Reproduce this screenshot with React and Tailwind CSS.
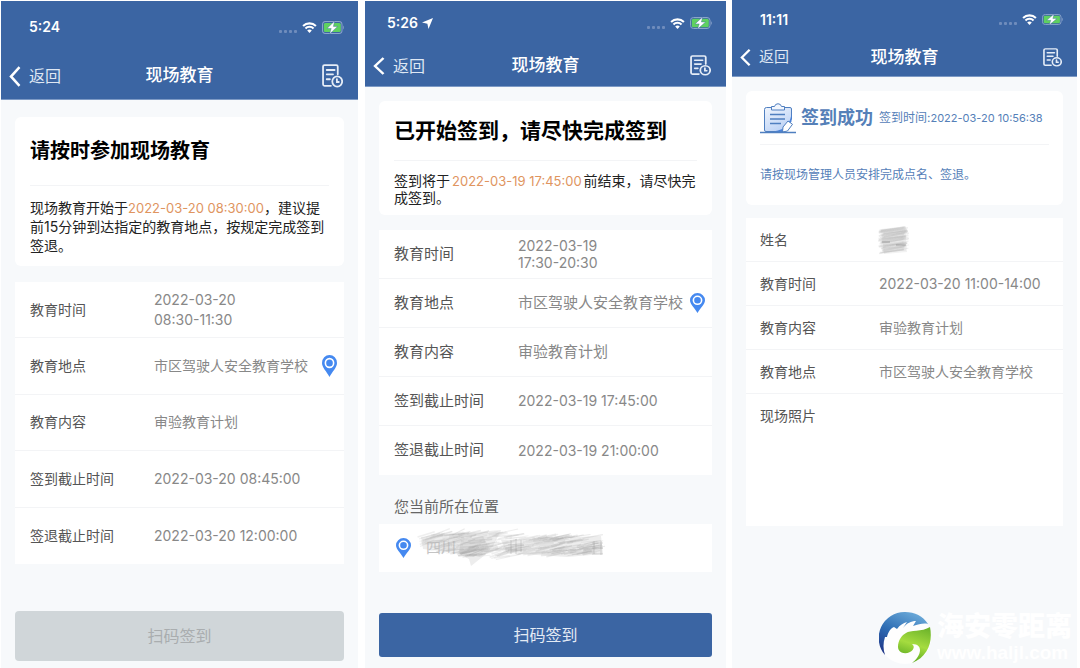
import { clsx } from 'clsx';

const FONT = "font-['Inter','Noto_Sans_CJK_SC',sans-serif]";

function WifiIcon() {
  return (
    <svg viewBox="0 0 16 12" className="h-[11px] w-[15px]" fill="none" stroke="#fff" strokeWidth="2.3">
      <path d="M1 4.3a10 10 0 0 1 14 0" />
      <path d="M3.6 7a6.3 6.3 0 0 1 8.8 0" />
      <path d="M8 12 5.5 9.3a3.3 3.3 0 0 1 5 0z" fill="#fff" stroke="none" />
    </svg>
  );
}

function BatteryIcon({ className }) {
  return (
    <svg viewBox="0 0 22 12" className={className} preserveAspectRatio="none">
      <rect x="0.5" y="0.5" width="19.5" height="11" rx="3" fill="none" stroke="#8ba4cb" />
      <rect x="1.8" y="1.8" width="17" height="8.4" rx="1.5" fill="#5fd160" />
      <path d="M21 4.2v3.6c1-.3 1-3.3 0-3.6z" fill="#8ba4cb" />
      <path d="M12.6 0 5 6.9h4.200L7.600 12l8-7h-4.200z" fill="#fff" stroke="#3b65a3" strokeWidth="0.4" />
    </svg>
  );
}

function LocationArrow() {
  return (
    <svg viewBox="0 0 10 10" className="size-[11px]">
      <path d="M10 0 5.900 10 4.900 5.200 0 4.200z" fill="#fff" />
    </svg>
  );
}

function RecordIcon({ className }) {
  return (
    <svg viewBox="0 0 20 22" className={className} preserveAspectRatio="none" fill="none" stroke="#e6edf7" strokeWidth="1.7" strokeLinecap="round">
      <path d="M8.5 20H2.4A1.4 1.4 0 0 1 1 18.600V2.400A1.400 1.400 0 0 1 2.400 1h11.200A1.400 1.400 0 0 1 15 2.400V9.500" />
      <path d="M4.500 5.500h7.500M4.500 9.500h6M4.500 14h3" />
      <circle cx="14.500" cy="16" r="4.700" />
      <path d="M14.200 13.800v2.700h1.800" />
    </svg>
  );
}

function PinIcon({ className }) {
  return (
    <svg viewBox="0 0 16 22" className={className} preserveAspectRatio="none">
      <path d="M8 0a8 8 0 0 0-8 8c0 4.500 5 8.500 8 14 3-5.500 8-9.500 8-14a8 8 0 0 0-8-8z" fill="#4589f0" />
      <circle cx="8" cy="8" r="4.400" fill="none" stroke="#fff" strokeWidth="1.700" />
    </svg>
  );
}

function ClipboardIcon() {
  return (
    <svg viewBox="0 0 36 33" className="h-[33px] w-[36px] shrink-0" fill="none" stroke="#4f7fc0" strokeLinejoin="round">
      <defs>
        <linearGradient id="board" x1="0" y1="0" x2="0.600" y2="1">
          <stop offset="0" stopColor="#f0f5fd" />
          <stop offset="1" stopColor="#bcd2f5" />
        </linearGradient>
      </defs>
      <path d="M6.500 6.500H30a1.500 1.500 0 0 1 1.500 1.500v10L24 30.500H6A1.500 1.500 0 0 1 4.500 29V8.500a2 2 0 0 1 2-2z" fill="url(#board)" />
      <path d="M31.500 12c-1 10-5 16.500-18 18.500h11l7-10z" fill="#4a82da" stroke="none" />
      <path d="M11.500 5.500h3a3.600 3.600 0 0 1 7 0h3v3.500h-13z" fill="#f2f6fd" />
      <path d="M10 13.500h15M10 18h15M10 22.500h11" strokeWidth="1.300" />
      <path d="m22.500 31 .5-5 5-6 4.500 3.300-5 6.700z" fill="#fff" />
      <path d="M0 31.500h36" strokeWidth="1.300" />
    </svg>
  );
}

function Header({ time, located, statusClass, navClass, backClass, chevronClass, iconClass, batteryClass }) {
  return (
    <header className="border-b border-[#7d9ac5] bg-[#3b65a3] text-white">
      <div className={clsx('flex items-center justify-between pr-[14px]', statusClass)}>
        <span className="flex items-center gap-1 text-sm font-semibold">
          {time}
          {located && <LocationArrow />}
        </span>
        <span className="flex items-center gap-[5px]">
          <span className="flex gap-[2px] pt-2">
            {[0, 1, 2, 3].map((n) => (
              <i key={n} className="size-[3px] rounded-[1px] bg-[#6f8cbc]" />
            ))}
          </span>
          <WifiIcon />
          <BatteryIcon className={batteryClass} />
        </span>
      </div>
      <nav className={clsx('grid grid-cols-[1fr_auto_1fr] items-center px-2', navClass)}>
        <button type="button" className={clsx('flex items-center gap-2 text-[#dfe7f3]', backClass)}>
          <svg viewBox="0 0 12 20" className={chevronClass} preserveAspectRatio="none" fill="none" stroke="#fff" strokeWidth="2.500">
            <path d="M10.500 1 2 10l8.500 9" />
          </svg>
          返回
        </button>
        <h1 className="text-[17px] font-medium">现场教育</h1>
        <button type="button" aria-label="记录" className="mr-[7px] justify-self-end">
          <RecordIcon className={iconClass} />
        </button>
      </nav>
    </header>
  );
}

function Row({ label, children, className }) {
  return (
    <div className={clsx('flex border-b border-[#f3f4f6] pl-[15px] pr-[7px] last:border-b-0 group-data-[compact]:pl-[14px]', className)}>
      <dt className="w-[124px] shrink-0 text-[#555] group-data-[compact]:w-[119px]">{label}</dt>
      <dd className="flex min-w-0 flex-1 items-center justify-between text-[#888]">{children}</dd>
    </div>
  );
}

function Num({ children }) {
  return <span className="text-sm">{children}</span>;
}

// Pseudoaleatório estável: o rabisco sai igual em toda renderização
function noise(n) {
  const x = Math.sin(n * 127.1 + 11.7) * 43758.5453;
  return x - Math.floor(x);
}

const ADDRESS_STROKES = Array.from({ length: 260 }, (_, i) => {
  const x = noise(i) * 168;
  const right = x > 82;
  const top = right ? 9 : 6;
  const span = right ? 20 : 15 + Math.min(x, 55) / 5;
  const y = top + noise(i + 500) * span;
  const len = 12 + noise(i + 900) * 12;
  const rise = right ? 1 + noise(i + 300) * 4 : 1 + noise(i + 300) * 6;
  const dark = (x > 32 && x < 54) || (x > 128 && x < 168);
  return { x, y, x2: Math.min(x + len, 189), y2: y - rise, dark };
});

const NAME_STROKES = Array.from({ length: 60 }, (_, i) => {
  const y = 6 + (i / 60) * 24;
  const x = noise(i + 40) * 6;
  return { x, y, x2: 25 + noise(i + 80) * 6, y2: y - 2 - noise(i + 60) * 3, dark: false };
});

function Strokes({ lines }) {
  return lines.map((l, i) => (
    <line
      key={i}
      x1={l.x}
      y1={l.y}
      x2={l.x2}
      y2={l.y2}
      stroke={l.dark ? '#a0a0a0' : '#b5b5b5'}
      strokeWidth={0.7 + noise(i + 7) * 1.1}
      strokeOpacity="0.22"
    />
  ));
}

// Rabiscos que escondem dados pessoais
function AddressSmudge() {
  return (
    <svg viewBox="0 0 190 40" className="h-[40px] w-[190px]">
      <text x="9" y="25" fontSize="15" fill="#c4c4c4">四川</text>
      <path d="M4 9 48 5 84 2 76 18 68 27 54 38 52 31 40 25 6 21zM84 12 184 8 186 26 150 29 90 25z" fill="#ccc" fillOpacity="0.35" />
      <path d="M44 12 66 8 72 20 56 29 42 25z" fill="#999" fillOpacity="0.2" />
      <Strokes lines={ADDRESS_STROKES} />
      <path d="M94 12v14M99 11v15M104 12v12M91 17h16M91 22h14M177 13v13M184 13v14M175 15h11M175 20h11M175 26h11" stroke="#888" strokeOpacity="0.3" />
    </svg>
  );
}

function NameSmudge() {
  return (
    <svg viewBox="0 0 32 32" className="-ml-px size-8">
      <path d="M3 6 27 2 29 28 6 30z" fill="#ccc" fillOpacity="0.25" />
      <Strokes lines={NAME_STROKES} />
      <path d="M4 18h8M18 21h10" stroke="#888" strokeWidth="2" strokeOpacity="0.35" />
    </svg>
  );
}

function Watermark() {
  return (
    <div className="absolute bottom-1 right-2 flex items-center gap-[6px] text-white">
      <svg viewBox="0 0 52 52" className="size-[52px]">
        <defs>
          <linearGradient id="wmBlue" x1="0.700" y1="0" x2="0.200" y2="1">
            <stop offset="0" stopColor="#6aa9d8" />
            <stop offset="0.500" stopColor="#2f6fb5" />
            <stop offset="1" stopColor="#1f3688" />
          </linearGradient>
          <linearGradient id="wmGreen" x1="0.700" y1="0" x2="0.400" y2="1">
            <stop offset="0" stopColor="#6fb52c" />
            <stop offset="0.500" stopColor="#a5dc3f" />
            <stop offset="1" stopColor="#55a51e" />
          </linearGradient>
        </defs>
        <circle cx="26" cy="26" r="26" fill="#fff" fillOpacity="0.8" />
        <path d="M6 43A26 26 0 0 1 26 0C36 0 44 4 49 12 45 11 40 12 34 14l3-5c-5 0-9 2-13 7l4-6c-4 1-7 3-10 7l-3-2c-3 1-6 5-7 10l-2 0c-2 6-2 12 0 18z" fill="url(#wmBlue)" />
        <path d="M51 15C54 30 49 45 33 51c4-3 8-8 8-13 0-3-2-6-8-6 3 2 2 6-2 8-6 3-12 0-12-5 0-7 4-12 8-14 4-3 16-1 24-6z" fill="url(#wmGreen)" />
      </svg>
      <div className="flex flex-col">
        <span className="text-[27px] font-black leading-[30px]">海安零距离</span>
        <span className="font-['Liberation_Sans',sans-serif] text-[19px] font-bold leading-[22px]">www.haljl.com</span>
      </div>
    </div>
  );
}

function UpcomingScreen() {
  return (
    <section className="mr-px mt-px flex flex-col bg-[#f7f9fb]">
      <Header
        time="5:24"
        statusClass="h-[52px] pl-7"
        navClass="h-[46px]"
        backClass="text-base"
        chevronClass="h-[21px] w-[12px]"
        iconClass="h-[24px] w-[21px]"
        batteryClass="h-[13px] w-[22px]"
      />
      <div className="mx-[14px] mt-[17px] rounded-md bg-white px-[15px] pb-[11px]">
        <h2 className="border-b border-[#f3f4f6] py-[19px] text-[20px] font-bold leading-[30px] text-black">请按时参加现场教育</h2>
        <p className="pt-3 text-sm leading-[19px] text-[#222]">
          现场教育开始于<span className="text-[13px] leading-none text-[#e0955f]">2022-03-20 08:30:00</span>，建议提前15分钟到达指定的教育地点，按规定完成签到签退。
        </p>
      </div>
      <dl className="mx-[14px] mt-4 grid h-[282px] auto-rows-fr bg-white text-sm">
        <Row label="教育时间" className="items-center">
          <span className="leading-5">2022-03-20<br />08:30-11:30</span>
        </Row>
        <Row label="教育地点" className="items-center">
          市区驾驶人安全教育学校
          <PinIcon className="h-[22px] w-[15px] shrink-0" />
        </Row>
        <Row label="教育内容" className="items-center">审验教育计划</Row>
        <Row label="签到截止时间" className="items-center">2022-03-20 08:45:00</Row>
        <Row label="签退截止时间" className="items-center">2022-03-20 12:00:00</Row>
      </dl>
      <button type="button" disabled className="mx-[14px] mt-[47px] h-[50px] rounded bg-[#d0d6d9] text-base text-[#a9adaf]">
        扫码签到
      </button>
    </section>
  );
}

function OpenScreen() {
  return (
    <section className="mt-px flex flex-col bg-[#f7f9fb]">
      <Header
        time="5:26"
        located
        statusClass="h-[44px] pl-[22px]"
        navClass="h-[41px]"
        backClass="text-base"
        chevronClass="h-[18px] w-[12px]"
        iconClass="h-[21px] w-[21px]"
        batteryClass="h-[12px] w-[22px]"
      />
      <div className="mx-[14px] mt-[14px] rounded-md bg-white px-[15px] pb-[9px]">
        <h2 className="border-b border-[#f3f4f6] py-[15px] text-[21px] font-bold leading-[29px] text-black">已开始签到，请尽快完成签到</h2>
        <p className="-mr-2 pt-[11px] text-sm leading-[17px] text-[#222]">
          签到将于<span className="mx-[2px] text-[13px] leading-none text-[#e0955f]">2022-03-19 17:45:00</span>前结束，请尽快完成签到。
        </p>
      </div>
      <dl className="mx-[14px] mt-[15px] grid h-[245px] auto-rows-fr bg-white text-[15px]">
        <Row label="教育时间" className="items-center">
          <span className="text-sm leading-[17px]">2022-03-19<br />17:30-20:30</span>
        </Row>
        <Row label="教育地点" className="items-center">
          市区驾驶人安全教育学校
          <PinIcon className="h-[20px] w-[15px] shrink-0" />
        </Row>
        <Row label="教育内容" className="items-center">审验教育计划</Row>
        <Row label="签到截止时间" className="items-center"><Num>2022-03-19 17:45:00</Num></Row>
        <Row label="签退截止时间" className="items-center"><Num>2022-03-19 21:00:00</Num></Row>
      </dl>
      <h3 className="mt-5 px-[29px] text-[15px] leading-6 text-[#666]">您当前所在位置</h3>
      <div className="mx-[14px] mt-[5px] flex h-[48px] items-center gap-[6px] bg-white pl-[17px]">
        <PinIcon className="h-[20px] w-[15px]" />
        <AddressSmudge />
      </div>
      <button type="button" className="mx-[14px] mt-[41px] h-[44px] rounded-[3px] bg-[#3b65a3] text-base text-[#e4ebf5]">
        扫码签到
      </button>
    </section>
  );
}

function SignedScreen() {
  return (
    <section className="flex flex-col bg-[#f7f9fb]">
      <Header
        time="11:11"
        statusClass="h-[39px] pl-7"
        navClass="h-[37px]"
        backClass="text-[15px]"
        chevronClass="h-[17px] w-[11px]"
        iconClass="h-[19px] w-[19px]"
        batteryClass="h-[11px] w-[21px]"
      />
      <div className="mx-[14px] mt-[14px] h-[114px] rounded-md bg-white px-[14px] text-[#5580b8]">
        <div className="flex h-[54px] items-center gap-[5px] border-b border-[#f3f4f6]">
          <ClipboardIcon />
          <h2 className="whitespace-nowrap text-[18px] font-bold">签到成功</h2>
          <span className="whitespace-nowrap pl-px text-xs">
            签到时间:<span className="text-[11px]">2022-03-20 10:56:38</span>
          </span>
        </div>
        <p className="pt-5 text-xs leading-5">请按现场管理人员安排完成点名、签退。</p>
      </div>
      <dl data-compact className="group mx-[14px] mt-[13px] bg-white text-sm">
        <Row label="姓名" className="h-[44px] items-center"><NameSmudge /></Row>
        <Row label="教育时间" className="h-[44px] items-center">2022-03-20 11:00-14:00</Row>
        <Row label="教育内容" className="h-[44px] items-center">审验教育计划</Row>
        <Row label="教育地点" className="h-[44px] items-center">市区驾驶人安全教育学校</Row>
        <Row label="现场照片" className="h-[132px] pt-3" />
      </dl>
    </section>
  );
}

export default function App() {
  return (
    <main lang="zh-CN" className={clsx('relative grid min-h-screen grid-cols-[358fr_361fr_345fr] gap-[6px] bg-white pl-px pr-[3px]', FONT)}>
      <UpcomingScreen />
      <OpenScreen />
      <SignedScreen />
      <Watermark />
    </main>
  );
}
